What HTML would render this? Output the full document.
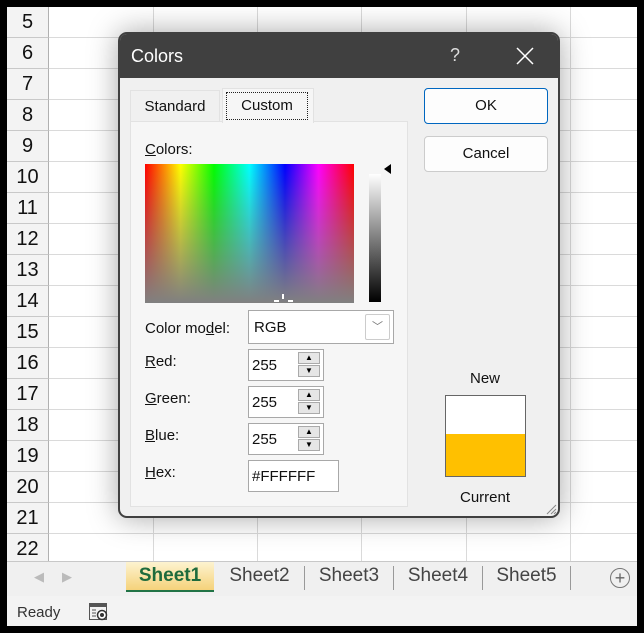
<!DOCTYPE html>
<html><head><style>
*{margin:0;padding:0;box-sizing:border-box}
body{width:644px;height:633px;background:#000;position:relative;overflow:hidden;font-family:"Liberation Sans",sans-serif}
.a{position:absolute}
.grid{left:7px;top:7px;width:630px;height:554px;background:#fff;overflow:hidden}
.rh{left:0;width:42px;height:31px;background:#f3f3f3;border-bottom:1px solid #c8c8c8;border-right:1px solid #b0b0b0;font-size:20px;text-align:center;line-height:31px;color:#111}
.hl{left:42px;right:0;height:1px;background:#dadada}
.vl{top:0;bottom:0;width:1px;background:#dadada}
.dlg{left:118px;top:32px;width:442px;height:486px;background:#f0f0f0;border:2px solid #404040;border-radius:9px;box-shadow:0 0 30px rgba(0,0,0,.35);overflow:hidden}
.lbl{font-size:15px;color:#111}
.box{background:#fff;border:1px solid #a8a8a8}
.spin{position:absolute;right:3px;width:22px;height:12px;background:#e6e6e6;border:1px solid #aaa}
.st{top:565px;color:#444;font-size:19px;text-align:center}
.sp{top:566px;width:1px;height:24px;background:#999}
</style></head><body>
<div class="a grid">
<div class="a rh" style="top:0">5</div><div class="a rh" style="top:31px">6</div><div class="a rh" style="top:62px">7</div><div class="a rh" style="top:93px">8</div><div class="a rh" style="top:124px">9</div><div class="a rh" style="top:155px">10</div><div class="a rh" style="top:186px">11</div><div class="a rh" style="top:217px">12</div><div class="a rh" style="top:248px">13</div><div class="a rh" style="top:279px">14</div><div class="a rh" style="top:310px">15</div><div class="a rh" style="top:341px">16</div><div class="a rh" style="top:372px">17</div><div class="a rh" style="top:403px">18</div><div class="a rh" style="top:434px">19</div><div class="a rh" style="top:465px">20</div><div class="a rh" style="top:496px">21</div><div class="a rh" style="top:527px">22</div>
<div class="a hl" style="top:30px"></div><div class="a hl" style="top:61px"></div><div class="a hl" style="top:92px"></div><div class="a hl" style="top:123px"></div><div class="a hl" style="top:154px"></div><div class="a hl" style="top:185px"></div><div class="a hl" style="top:216px"></div><div class="a hl" style="top:247px"></div><div class="a hl" style="top:278px"></div><div class="a hl" style="top:309px"></div><div class="a hl" style="top:340px"></div><div class="a hl" style="top:371px"></div><div class="a hl" style="top:402px"></div><div class="a hl" style="top:433px"></div><div class="a hl" style="top:464px"></div><div class="a hl" style="top:495px"></div><div class="a hl" style="top:526px"></div>
<div class="a vl" style="left:146px"></div><div class="a vl" style="left:250px"></div><div class="a vl" style="left:354px"></div><div class="a vl" style="left:459px"></div><div class="a vl" style="left:563px"></div>
</div>
<!-- tab bar -->
<div class="a" style="left:7px;top:561px;width:630px;height:35px;background:#f0f0f0;border-top:1px solid #c8c8c8"></div>
<div class="a" style="left:34px;top:569px;color:#bbb;font-size:13px">◀&nbsp;&nbsp;&nbsp;&nbsp;&nbsp;▶</div>
<div class="a" style="left:126px;top:562px;width:88px;height:30px;background:linear-gradient(#fdf3d0,#f5d27a);border-bottom:2px solid #217346;color:#1e6b3c;font-weight:bold;font-size:19px;text-align:center;line-height:28px">Sheet1</div>
<div class="a st" style="left:215px;width:89px">Sheet2</div>
<div class="a sp" style="left:304px"></div>
<div class="a st" style="left:305px;width:88px">Sheet3</div>
<div class="a sp" style="left:393px"></div>
<div class="a st" style="left:394px;width:88px">Sheet4</div>
<div class="a sp" style="left:482px"></div>
<div class="a st" style="left:483px;width:87px">Sheet5</div>
<div class="a sp" style="left:570px"></div>
<div class="a" style="left:610px;top:568px;width:20px;height:20px;border:1px solid #777;border-radius:50%;text-align:center;line-height:18px;color:#666;font-size:18px">+</div>
<div class="a" style="left:7px;top:596px;width:630px;height:30px;background:#f3f3f3"></div>
<div class="a" style="left:17px;top:604px;font-size:15px;color:#333">Ready</div>
<svg class="a" style="left:88px;top:602px" width="22" height="20"><rect x="1" y="1" width="18" height="3" fill="#555"/><rect x="1.5" y="4.5" width="17" height="13" fill="none" stroke="#555"/><path d="M4 8h4M4 11h4M4 14h4" stroke="#555"/><circle cx="14" cy="13" r="4.5" fill="#fff" stroke="#333" stroke-width="1.5"/><circle cx="14" cy="13" r="2" fill="#333"/></svg>
<!-- dialog -->
<div class="a dlg">
<div class="a" style="left:0;top:0;right:0;height:44px;background:#404040"></div>
<div class="a" style="left:11px;top:12px;color:#fff;font-size:18px">Colors</div>
<div class="a" style="left:330px;top:11px;color:#ddd;font-size:18px">?</div>
<svg class="a" style="left:396px;top:13px" width="18" height="18"><path d="M1 1L17 17M17 1L1 17" stroke="#fff" stroke-width="1.5"/></svg>
<div class="a" style="left:10px;top:87px;width:278px;height:386px;background:#f6f6f6;border:1px solid #e2e2e2"></div>
<div class="a lbl" style="left:10px;top:56px;width:90px;height:32px;border:1px solid #e2e2e2;border-bottom:none;text-align:center;line-height:32px">Standard</div>
<div class="a" style="left:102px;top:54px;width:92px;height:35px;background:#f6f6f6;border:1px solid #e2e2e2;border-bottom:none"></div>
<div class="a lbl" style="left:106px;top:58px;width:82px;height:28px;border:1px dotted #222;text-align:center;line-height:26px">Custom</div>
<div class="a lbl" style="left:25px;top:107px"><u>C</u>olors:</div>
<div class="a" style="left:25px;top:130px;width:209px;height:139px;background:linear-gradient(to bottom,rgba(128,128,128,0),#808080),linear-gradient(to right,#f00,#ff0 17%,#0f0 33%,#0ff 50%,#00f 67%,#f0f 83%,#f00)"></div>
<div class="a" style="left:162px;top:260px;width:2px;height:5px;background:#fff"></div>
<div class="a" style="left:154px;top:266px;width:5px;height:2px;background:#fff"></div>
<div class="a" style="left:168px;top:266px;width:5px;height:2px;background:#fff"></div>
<div class="a" style="left:249px;top:140px;width:12px;height:128px;background:linear-gradient(#fff,#000)"></div>
<div class="a" style="left:264px;top:130px;width:0;height:0;border-top:5px solid transparent;border-bottom:5px solid transparent;border-right:7px solid #000"></div>
<div class="a lbl" style="left:25px;top:286px">Color mo<u>d</u>el:</div>
<div class="a box" style="left:128px;top:276px;width:146px;height:34px"><span class="a lbl" style="left:5px;top:8px">RGB</span><div class="a" style="right:3px;top:3px;width:25px;height:26px;border:1px solid #ccc;border-radius:2px;color:#777;font-size:11px;text-align:center;line-height:24px">﹀</div></div>
<div class="a lbl" style="left:25px;top:319px"><u>R</u>ed:</div>
<div class="a lbl" style="left:25px;top:356px"><u>G</u>reen:</div>
<div class="a lbl" style="left:25px;top:393px"><u>B</u>lue:</div>
<div class="a lbl" style="left:25px;top:430px"><u>H</u>ex:</div>
<div class="a box" style="left:128px;top:315px;width:76px;height:32px"><span class="a lbl" style="left:3px;top:7px">255</span><div class="spin" style="top:2px;font-size:8px;text-align:center;line-height:10px">▲</div><div class="spin" style="top:15px;font-size:8px;text-align:center;line-height:10px">▼</div></div>
<div class="a box" style="left:128px;top:352px;width:76px;height:32px"><span class="a lbl" style="left:3px;top:7px">255</span><div class="spin" style="top:2px;font-size:8px;text-align:center;line-height:10px">▲</div><div class="spin" style="top:15px;font-size:8px;text-align:center;line-height:10px">▼</div></div>
<div class="a box" style="left:128px;top:389px;width:76px;height:32px"><span class="a lbl" style="left:3px;top:7px">255</span><div class="spin" style="top:2px;font-size:8px;text-align:center;line-height:10px">▲</div><div class="spin" style="top:15px;font-size:8px;text-align:center;line-height:10px">▼</div></div>
<div class="a box" style="left:128px;top:426px;width:91px;height:32px"><span class="a lbl" style="left:3px;top:7px">#FFFFFF</span></div>
<div class="a lbl" style="left:304px;top:54px;width:124px;height:36px;background:#fdfdfd;border:1px solid #0067c0;border-radius:4px;text-align:center;line-height:34px">OK</div>
<div class="a lbl" style="left:304px;top:102px;width:124px;height:36px;background:#fdfdfd;border:1px solid #ccc;border-radius:4px;text-align:center;line-height:34px">Cancel</div>
<div class="a lbl" style="left:325px;top:336px;width:80px;text-align:center">New</div>
<div class="a" style="left:325px;top:361px;width:81px;height:82px;border:1px solid #666;background:linear-gradient(#fff 0,#fff 38px,#ffc000 38px)"></div>
<div class="a lbl" style="left:315px;top:455px;width:100px;text-align:center">Current</div>
<svg class="a" style="right:1px;bottom:1px" width="12" height="12"><path d="M11 2L2 11M11 6L6 11M11 9L9 11" stroke="#888"/></svg>
</div>
</body></html>
